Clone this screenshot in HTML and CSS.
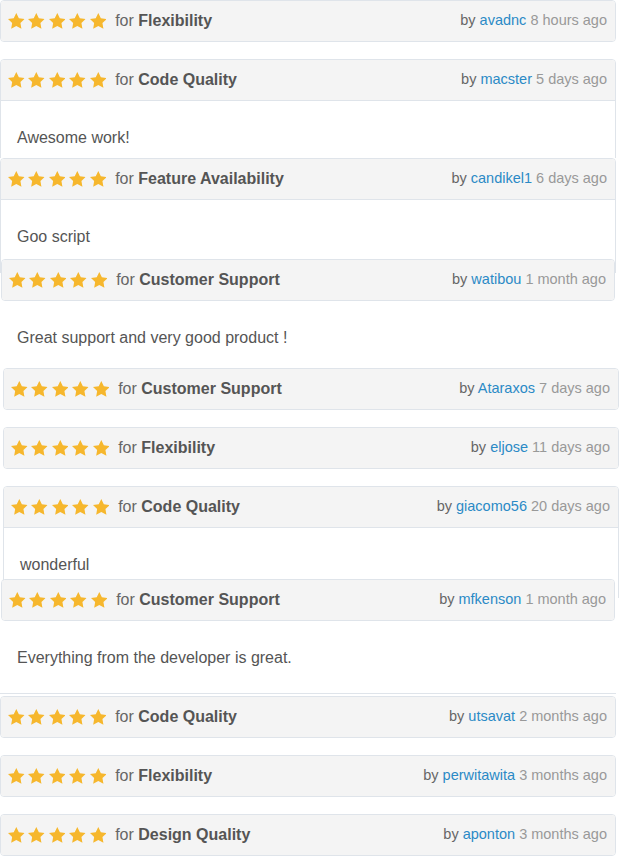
FILE: index.html
```html
<!DOCTYPE html>
<html lang="en">
<head>
<meta charset="utf-8">
<title>Reviews</title>
<link rel="stylesheet" href="styles.css">
</head>
<body>
<svg class="defs" width="0" height="0" aria-hidden="true">
  <symbol id="star" viewBox="2 2 20 19.1">
    <path d="M12 2l3.09 6.26L22 9.27l-5 4.87 1.18 6.88L12 17.77l-6.18 3.25L7 14.14 2 9.27l6.91-1.01L12 2z"/>
  </symbol>
</svg>

<div class="feed">

  <!-- 1 -->
  <article class="review s-a">
    <header class="head">
      <div class="rating"><span class="stars"><svg><use href="#star"/></svg><svg><use href="#star"/></svg><svg><use href="#star"/></svg><svg><use href="#star"/></svg><svg><use href="#star"/></svg></span><span class="for">for <strong>Flexibility</strong></span></div>
      <div class="meta">by <a class="user">avadnc</a> <span class="time">8 hours ago</span></div>
    </header>
  </article>

  <!-- 2 -->
  <div class="clip clip-2">
    <article class="review s-a with-body">
      <header class="head">
        <div class="rating"><span class="stars"><svg><use href="#star"/></svg><svg><use href="#star"/></svg><svg><use href="#star"/></svg><svg><use href="#star"/></svg><svg><use href="#star"/></svg></span><span class="for">for <strong>Code Quality</strong></span></div>
        <div class="meta">by <a class="user">macster</a> <span class="time">5 days ago</span></div>
      </header>
      <p class="text">Awesome work!</p>
    </article>
  </div>

  <!-- 3 -->
  <div class="clip clip-3">
    <article class="review s-a with-body">
      <header class="head">
        <div class="rating"><span class="stars"><svg><use href="#star"/></svg><svg><use href="#star"/></svg><svg><use href="#star"/></svg><svg><use href="#star"/></svg><svg><use href="#star"/></svg></span><span class="for">for <strong>Feature Availability</strong></span></div>
        <div class="meta">by <a class="user">candikel1</a> <span class="time">6 days ago</span></div>
      </header>
      <p class="text">Goo script</p>
    </article>
  </div>

  <!-- 4 -->
  <section class="open open-4">
    <article class="review s-b">
      <header class="head">
        <div class="rating"><span class="stars"><svg><use href="#star"/></svg><svg><use href="#star"/></svg><svg><use href="#star"/></svg><svg><use href="#star"/></svg><svg><use href="#star"/></svg></span><span class="for">for <strong>Customer Support</strong></span></div>
        <div class="meta">by <a class="user">watibou</a> <span class="time">1 month ago</span></div>
      </header>
    </article>
    <p class="text plain">Great support and very good product !</p>
  </section>

  <!-- 5 -->
  <article class="review s-c">
    <header class="head">
      <div class="rating"><span class="stars"><svg><use href="#star"/></svg><svg><use href="#star"/></svg><svg><use href="#star"/></svg><svg><use href="#star"/></svg><svg><use href="#star"/></svg></span><span class="for">for <strong>Customer Support</strong></span></div>
      <div class="meta">by <a class="user">Ataraxos</a> <span class="time">7 days ago</span></div>
    </header>
  </article>

  <!-- 6 -->
  <article class="review s-c gap">
    <header class="head">
      <div class="rating"><span class="stars"><svg><use href="#star"/></svg><svg><use href="#star"/></svg><svg><use href="#star"/></svg><svg><use href="#star"/></svg><svg><use href="#star"/></svg></span><span class="for">for <strong>Flexibility</strong></span></div>
      <div class="meta">by <a class="user">eljose</a> <span class="time">11 days ago</span></div>
    </header>
  </article>

  <!-- 7 -->
  <div class="clip clip-7 gap">
    <article class="review s-c with-body">
      <header class="head">
        <div class="rating"><span class="stars"><svg><use href="#star"/></svg><svg><use href="#star"/></svg><svg><use href="#star"/></svg><svg><use href="#star"/></svg><svg><use href="#star"/></svg></span><span class="for">for <strong>Code Quality</strong></span></div>
        <div class="meta">by <a class="user">giacomo56</a> <span class="time">20 days ago</span></div>
      </header>
      <p class="text">wonderful</p>
    </article>
  </div>

  <!-- 8 -->
  <section class="open open-8">
    <article class="review s-b">
      <header class="head">
        <div class="rating"><span class="stars"><svg><use href="#star"/></svg><svg><use href="#star"/></svg><svg><use href="#star"/></svg><svg><use href="#star"/></svg><svg><use href="#star"/></svg></span><span class="for">for <strong>Customer Support</strong></span></div>
        <div class="meta">by <a class="user">mfkenson</a> <span class="time">1 month ago</span></div>
      </header>
    </article>
    <p class="text plain tall">Everything from the developer is great.</p>
  </section>

  <hr class="rule">

  <!-- 9 -->
  <article class="review s-a after-rule">
    <header class="head">
      <div class="rating"><span class="stars"><svg><use href="#star"/></svg><svg><use href="#star"/></svg><svg><use href="#star"/></svg><svg><use href="#star"/></svg><svg><use href="#star"/></svg></span><span class="for">for <strong>Code Quality</strong></span></div>
      <div class="meta">by <a class="user">utsavat</a> <span class="time">2 months ago</span></div>
    </header>
  </article>

  <!-- 10 -->
  <article class="review s-a gap">
    <header class="head">
      <div class="rating"><span class="stars"><svg><use href="#star"/></svg><svg><use href="#star"/></svg><svg><use href="#star"/></svg><svg><use href="#star"/></svg><svg><use href="#star"/></svg></span><span class="for">for <strong>Flexibility</strong></span></div>
      <div class="meta">by <a class="user">perwitawita</a> <span class="time">3 months ago</span></div>
    </header>
  </article>

  <!-- 11 -->
  <article class="review s-a gap">
    <header class="head">
      <div class="rating"><span class="stars"><svg><use href="#star"/></svg><svg><use href="#star"/></svg><svg><use href="#star"/></svg><svg><use href="#star"/></svg><svg><use href="#star"/></svg></span><span class="for">for <strong>Design Quality</strong></span></div>
      <div class="meta">by <a class="user">aponton</a> <span class="time">3 months ago</span></div>
    </header>
  </article>

</div>
</body>
</html>
```

FILE: styles.css
```css
html, body {
  margin: 0;
  padding: 0;
  background: #ffffff;
}

body {
  font-family: "Liberation Sans", Arial, sans-serif;
  font-size: 16px;
  color: #555555;
}

.defs {
  position: absolute;
  width: 0;
  height: 0;
  overflow: hidden;
}

.feed {
  display: block;
  width: 619px;
}

/* card */
.review {
  box-sizing: border-box;
  width: 616px;
  border: 1px solid #dfe4ea;
  border-radius: 4px;
  background: #ffffff;
  overflow: hidden;
}

.s-a { margin-left: 0; }
.s-b { margin-left: 1px; width: 614px; }
.s-c { margin-left: 3px; }

.gap { margin-top: 17px; }

.review.s-a:first-child + .clip-2 { margin-top: 17px; }

.head {
  box-sizing: border-box;
  height: 40px;
  background: #f4f4f4;
  display: flex;
  align-items: center;
  justify-content: space-between;
  padding: 0 8px 0 7px;
}

.with-body .head {
  height: 41px;
  border-bottom: 1px solid #dfe4ea;
}

.rating {
  display: flex;
  align-items: center;
}

.stars {
  display: flex;
  align-items: center;
  gap: 3.8px;
  margin-right: 9px;
}

.stars svg {
  width: 16.6px;
  height: 15.9px;
  fill: #f6b72d;
  display: block;
}

.for {
  color: #666666;
  line-height: 20px;
}

.for strong {
  color: #555555;
  font-weight: bold;
}

.meta {
  color: #666666;
  font-size: 14.5px;
  line-height: 20px;
  white-space: nowrap;
  margin-bottom: 2px;
}

.user {
  color: #2b8ac6;
  text-decoration: none;
}

.time {
  color: #999999;
}

.text {
  margin: 0;
  padding: 27px 16px 0 16px;
  line-height: 20px;
  min-height: 200px;
  color: #555555;
}

.text.plain {
  min-height: 0;
  height: 67px;
  box-sizing: border-box;
  padding-left: 17px;
}

.text.plain.tall {
  height: 72px;
}

/* slices clipped from taller cards */
.clip {
  overflow: hidden;
}

.clip-2 { height: 99px; }
.clip-3 { height: 115px; }
.clip-7 { height: 112px; }

.open-4 { margin-top: -14px; }
.open-8 { margin-top: -19px; }

.rule {
  box-sizing: border-box;
  width: 616px;
  height: 1px;
  margin: 0;
  border: 0;
  background: #dfe4ea;
}

.after-rule { margin-top: 2px; }
```
